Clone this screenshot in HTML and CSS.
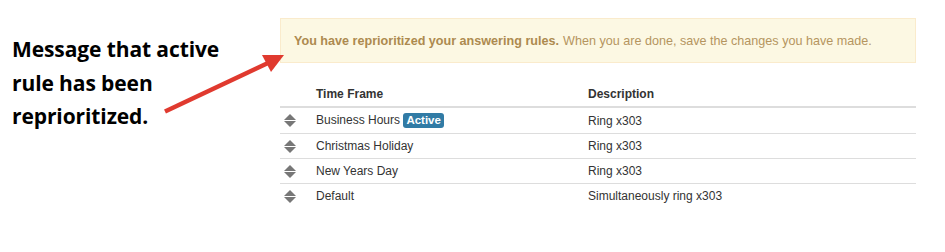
FILE: index.html
```html
<!DOCTYPE html>
<html>
<head>
<meta charset="utf-8">
<link rel="stylesheet" href="styles.css">
</head>
<body>
<div class="page">
  <div class="note">
    <p>Message that active rule has been reprioritized.</p>
  </div>
  <div class="main">
    <div class="alert"><strong>You have reprioritized your answering rules.</strong> When you are done, save the changes you have made.</div>
    <table class="rules">
      <thead>
        <tr><th></th><th>Time Frame</th><th>Description</th></tr>
      </thead>
      <tbody>
        <tr><td><span class="sort"></span></td><td>Business Hours <span class="badge">Active</span></td><td>Ring x303</td></tr>
        <tr><td><span class="sort"></span></td><td>Christmas Holiday</td><td>Ring x303</td></tr>
        <tr><td><span class="sort"></span></td><td>New Years Day</td><td>Ring x303</td></tr>
        <tr><td><span class="sort"></span></td><td>Default</td><td>Simultaneously ring x303</td></tr>
      </tbody>
    </table>
  </div>
  <svg class="arrow" width="945" height="252" viewBox="0 0 945 252">
    <line x1="165" y1="111.5" x2="268" y2="63" stroke="#e03a2f" stroke-width="4.5"/>
    <polygon points="284,55 262,55 271,72" fill="#e03a2f"/>
  </svg>
</div>
</body>
</html>
```

FILE: styles.css
```css
html, body { margin: 0; padding: 0; background: #fff; }
.page {
  position: relative;
  width: 945px;
  height: 252px;
  display: flex;
}
.note {
  width: 280px;
  padding-left: 12px;
  padding-top: 33px;
  box-sizing: border-box;
}
.note p {
  margin: 0;
  width: 240px;
  font-family: "Open Sans", "Liberation Sans", sans-serif;
  font-weight: 700;
  font-size: 21px;
  line-height: 33.5px;
  letter-spacing: -0.1px;
  color: #000;
}
.main {
  width: 636px;
  padding-top: 18px;
  font-family: "Liberation Sans", Arial, sans-serif;
  font-size: 12px;
}
.alert {
  height: 45px;
  box-sizing: border-box;
  background: #fcf8e3;
  border: 1px solid #faebcc;
  color: #b59560;
  padding: 0 13px;
  display: flex;
  align-items: center;
  gap: 4px;
  white-space: nowrap;
  font-size: 12.6px;
}
.alert strong { font-weight: 700; color: #ad8a4f; }
.rules {
  margin-top: 18px;
  width: 100%;
  border-collapse: collapse;
  color: #333;
}
.rules th {
  text-align: left;
  font-weight: 700;
  height: 24px;
  padding: 1px 0 0;
  border-bottom: 2px solid #ddd;
  vertical-align: middle;
}
.rules td {
  height: 24px;
  padding: 0;
  border-top: 1px solid #ddd;
  vertical-align: middle;
}
.rules tbody tr:first-child td { border-top: none; height: 25px; }
.rules th:nth-child(1), .rules td:nth-child(1) { width: 32px; padding-left: 4px; }
.rules th:nth-child(2), .rules td:nth-child(2) { width: 272px; }
.sort {
  display: block;
  width: 13px;
  height: 13px;
  position: relative;
}
.sort::before, .sort::after {
  content: "";
  position: absolute;
  left: 0;
  width: 0;
  height: 0;
  border-left: 6.5px solid transparent;
  border-right: 6.5px solid transparent;
}
.sort::before { top: 0; border-bottom: 6px solid #777; }
.sort::after { bottom: 0; border-top: 6px solid #777; }
.badge {
  display: inline-block;
  background: #317ba5;
  color: #fff;
  font-weight: 700;
  font-size: 11.5px;
  line-height: 13px;
  padding: 1px 3px 1px;
  border-radius: 3px;
}
.arrow {
  position: absolute;
  left: 0;
  top: 0;
  pointer-events: none;
}
```
